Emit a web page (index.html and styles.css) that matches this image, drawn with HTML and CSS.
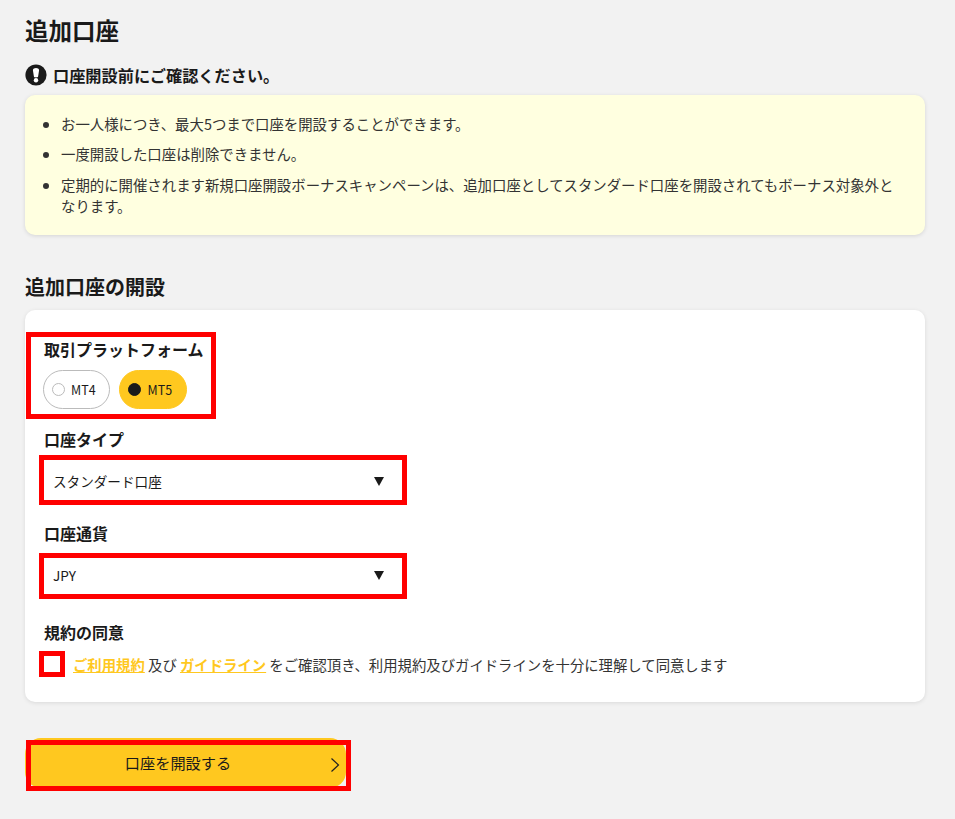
FILE: index.html
```html
<!DOCTYPE html>
<html lang="ja">
<head>
    <meta charset="UTF-8">
    <title>追加口座</title>
    <link rel="stylesheet" href="styles.css">
</head>
<body>
<main class="page">
    <h1>追加口座</h1>

    <!-- Notice -->
    <h3 class="notice-title">
        <svg class="notice-icon" viewBox="0 0 22 22" width="22" height="22" aria-hidden="true">
            <circle cx="11" cy="11" r="10.6" fill="#1a1a1a"/>
            <path d="M7.9 6.2 C7.9 3.2 14.1 3.2 14.1 6.2 L13.1 12.6 C13 13.8 9 13.8 8.9 12.6 Z" fill="#fff"/>
            <circle cx="11" cy="16.3" r="2.2" fill="#fff"/>
        </svg>
        口座開設前にご確認ください。
    </h3>
    <div class="notice">
        <ul>
            <li>お一人様につき、最大5つまで口座を開設することができます。</li>
            <li>一度開設した口座は削除できません。</li>
            <li>定期的に開催されます新規口座開設ボーナスキャンペーンは、追加口座としてスタンダード口座を開設されてもボーナス対象外となります。</li>
        </ul>
    </div>

    <h2>追加口座の開設</h2>

    <!-- Form -->
    <form class="card">
        <div class="field field-platform">
            <span class="mark mark-platform"></span>
            <p class="label">取引プラットフォーム</p>
            <div class="radios">
                <label class="radio"><span class="dot"></span>MT4</label>
                <label class="radio active"><span class="dot"></span>MT5</label>
            </div>
        </div>

        <div class="field field-type">
            <p class="label">口座タイプ</p>
            <div class="select">
                <span class="mark mark-select"></span>
                <span>スタンダード口座</span>
                <span class="arrow"></span>
            </div>
        </div>

        <div class="field field-currency">
            <p class="label">口座通貨</p>
            <div class="select select-short">
                <span class="mark mark-select"></span>
                <span>JPY</span>
                <span class="arrow"></span>
            </div>
        </div>

        <div class="field field-agree">
            <p class="label">規約の同意</p>
            <div class="agree">
                <span class="check"></span>
                <p><a href="#">ご利用規約</a> 及び <a href="#">ガイドライン</a> をご確認頂き、利用規約及びガイドラインを十分に理解して同意します</p>
            </div>
        </div>
    </form>

    <div class="submit-wrap">
        <span class="mark mark-submit"></span>
        <button class="submit" type="button">
            口座を開設する
            <svg class="chevron" viewBox="0 0 10 16" width="10" height="16" aria-hidden="true">
                <path d="M1.5 1.5 L8.5 8 L1.5 14.5" fill="none" stroke="#222" stroke-width="1.2"/>
            </svg>
        </button>
    </div>
</main>
</body>
</html>
```

FILE: styles.css
```css
* {
    box-sizing: border-box;
}
body {
    margin: 0;
    background-color: #f2f2f2;
    color: #1a1a1a;
    font-family: "Noto Sans CJK JP", "Noto Sans", sans-serif;
    font-size: 14.4px;
}
p, h1, h2, h3, ul {
    margin: 0;
}
.page {
    padding: 12px 30px 28px 25px;
}
h1 {
    font-size: 23.5px;
    line-height: 36px;
    font-weight: 700;
}
.notice-title {
    display: flex;
    align-items: center;
    gap: 6px;
    margin-top: 13px;
    height: 28px;
    font-size: 16.2px;
    font-weight: 700;
}
.notice-icon {
    margin-top: -1px;
}
.notice {
    margin-top: 6px;
    background: #ffffe0;
    border-radius: 10px;
    box-shadow: 0 1px 4px rgba(0, 0, 0, 0.12);
    padding: 17.6px 30px 18.4px 18px;
    line-height: 21.6px;
}
.notice ul {
    padding-left: 18px;
}
.notice li {
    margin-bottom: 9px;
    color: #333;
}
.notice li:last-child {
    margin-bottom: 0;
}
h2 {
    margin-top: 36px;
    font-size: 20px;
    line-height: 32px;
    font-weight: 700;
}
.card {
    margin-top: 7px;
    background: #fff;
    border-radius: 10px;
    box-shadow: 0 1px 4px rgba(0, 0, 0, 0.1);
    padding: 27px 19px 25px;
}
.field {
    position: relative;
}
.label {
    font-size: 16px;
    font-weight: 700;
    line-height: 24px;
}
.mark {
    position: absolute;
    border: 5px solid #f00;
    pointer-events: none;
}
.mark-platform {
    left: -18px;
    top: -5px;
    width: 190px;
    height: 87px;
}
.mark-select {
    inset: -5px;
}
.mark-submit {
    left: 1px;
    top: 2px;
    width: 325px;
    height: 51px;
    z-index: 1;
}
.radios {
    display: flex;
    gap: 9px;
    margin: 9px 0 0 -1px;
}
.radio {
    display: flex;
    align-items: center;
    gap: 6px;
    height: 39px;
    padding: 0 13px 0 8px;
    border: 1px solid #bbb;
    border-radius: 20px;
    font-size: 12.5px;
}
.dot {
    width: 13px;
    height: 13px;
    border: 1px solid #bbb;
    border-radius: 50%;
    background: #fff;
}
.radio.active {
    gap: 7px;
    background: #ffc81f;
    border-color: #ffc81f;
    padding-right: 14px;
}
.radio.active .dot {
    background: #1a1a1a;
    border-color: #1a1a1a;
}
.field-type {
    margin-top: 18px;
}
.field-currency {
    margin-top: 21px;
}
.field-agree {
    margin-top: 26px;
}
.select {
    position: relative;
    display: flex;
    justify-content: space-between;
    align-items: center;
    width: 358px;
    height: 41px;
    margin-top: 8px;
    padding: 2px 18px 0 9px;
    border-top: 1px solid #bbb;
    font-size: 13.6px;
}
.select-short {
    height: 36px;
    margin-top: 13px;
    padding: 0 18px 2px 9px;
    border-top: none;
}
.arrow {
    border-left: 5px solid transparent;
    border-right: 5px solid transparent;
    border-top: 9px solid #1a1a1a;
}
.agree {
    display: flex;
    align-items: center;
    gap: 8px;
    margin-top: 7px;
}
.check {
    width: 26px;
    height: 26px;
    margin-left: -5px;
    border: 5px solid #f00;
    background: #fff;
}
.agree p {
    color: #333;
    font-size: 14.37px;
}
.agree a {
    color: #ffc81f;
    font-weight: 700;
}
.submit-wrap {
    position: relative;
    margin-top: 36px;
    width: 321px;
    height: 50px;
}
.submit {
    position: relative;
    display: block;
    width: 100%;
    height: 100%;
    padding: 0 15px 2px 0;
    border: none;
    border-radius: 16px;
    background: #ffc81f;
    color: #1a1a1a;
    font-family: inherit;
    font-size: 15.2px;
    cursor: pointer;
}
.chevron {
    position: absolute;
    right: 6px;
    top: 19px;
}
```
